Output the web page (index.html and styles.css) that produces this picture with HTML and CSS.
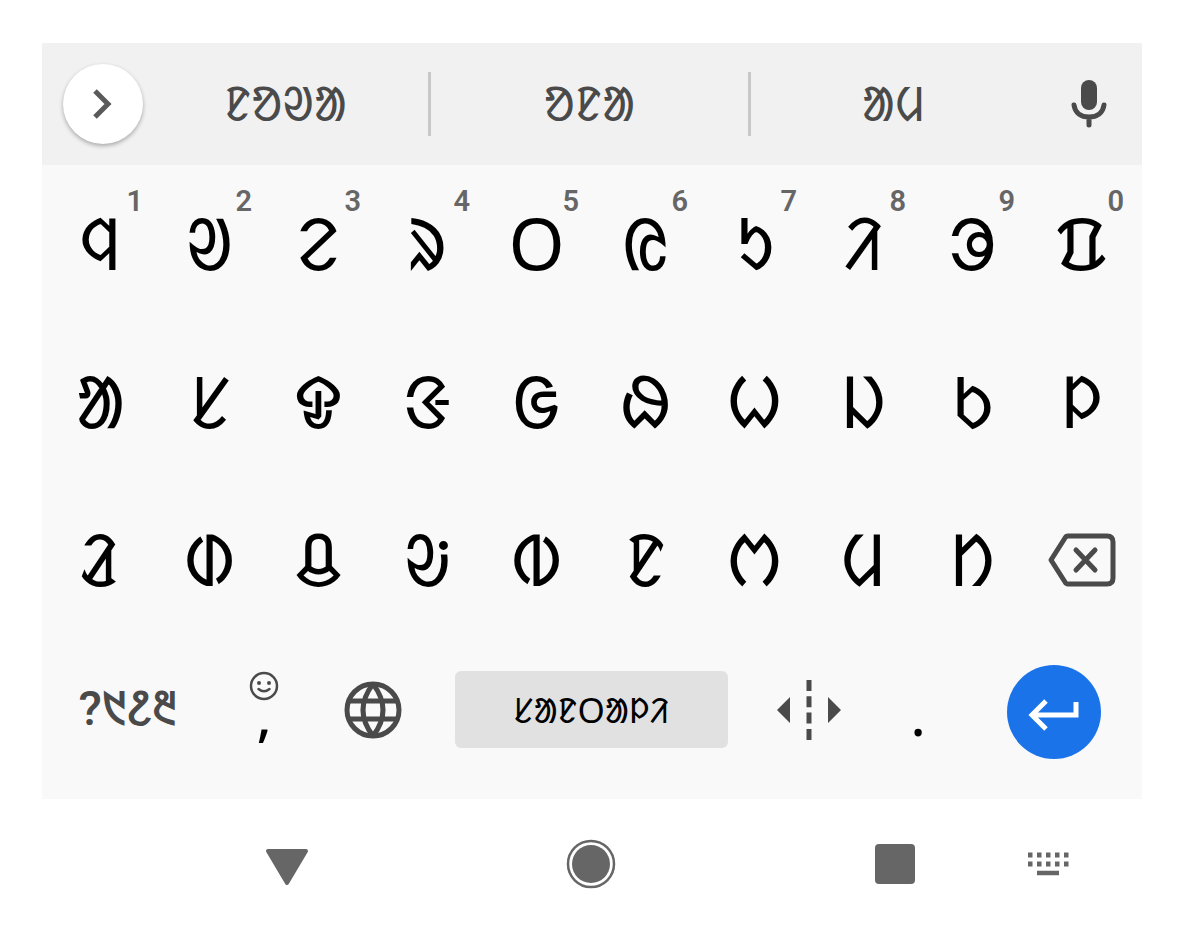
FILE: index.html
```html
<!DOCTYPE html>
<html lang="sat">
<head>
<meta charset="UTF-8">
<meta name="viewport" content="width=device-width, initial-scale=1.0">
<title>ᱥᱟᱱᱛᱟᱞᱤ</title>
<link rel="stylesheet" href="styles.css">
</head>
<body>
<div class="keyboard">
    <div class="strip">
        <button class="expand" aria-label="Expand">
            <svg width="24" height="32" viewBox="0 0 24 32"><path d="M4 3L17 16L4 29" fill="none" stroke="#5a5a5a" stroke-width="5"/></svg>
        </button>
        <div class="suggestions">
            <button class="suggestion">ᱱᱚᱣᱟ</button>
            <button class="suggestion middle">ᱚᱱᱟ</button>
            <button class="suggestion">ᱟᱢ</button>
        </div>
        <button class="mic" aria-label="Voice input">
            <svg width="36" height="48" viewBox="0 0 36 48">
                <rect x="10" y="0" width="16" height="30" rx="8" fill="#4a4a4a"/>
                <path d="M3 25C4 33 10 37 18 37S32 33 33 25M18 37V45" fill="none" stroke="#4a4a4a" stroke-width="5" stroke-linecap="round"/>
            </svg>
        </button>
    </div>

    <div class="rows">
        <div class="row">
            <button class="key">ᱧ<span class="hint">1</span></button>
            <button class="key">ᱣ<span class="hint">2</span></button>
            <button class="key">ᱮ<span class="hint">3</span></button>
            <button class="key">ᱨ<span class="hint">4</span></button>
            <button class="key">ᱛ<span class="hint">5</span></button>
            <button class="key">ᱭ<span class="hint">6</span></button>
            <button class="key">ᱩ<span class="hint">7</span></button>
            <button class="key">ᱤ<span class="hint">8</span></button>
            <button class="key">ᱳ<span class="hint">9</span></button>
            <button class="key">ᱯ<span class="hint">0</span></button>
        </div>
        <div class="row">
            <button class="key">ᱟ</button>
            <button class="key">ᱥ</button>
            <button class="key">ᱫ</button>
            <button class="key">ᱝ</button>
            <button class="key">ᱜ</button>
            <button class="key">ᱷ</button>
            <button class="key">ᱦ</button>
            <button class="key">ᱡ</button>
            <button class="key">ᱠ</button>
            <button class="key">ᱞ</button>
        </div>
        <div class="row">
            <button class="key">ᱲ</button>
            <button class="key">ᱰ</button>
            <button class="key">ᱪ</button>
            <button class="key">ᱶ</button>
            <button class="key">ᱵ</button>
            <button class="key">ᱱ</button>
            <button class="key">ᱬ</button>
            <button class="key">ᱢ</button>
            <button class="key">ᱴ</button>
            <button class="key icon" aria-label="Backspace">
                <svg width="70" height="56" viewBox="0 0 70 56" fill="none" stroke="#4a4a4a" stroke-width="5">
                    <path d="M21 4H60Q66 4 66 10V46Q66 52 60 52H21Q19 52 18 50L4 28L18 6Q19 4 21 4Z" stroke-linejoin="round"/>
                    <path d="M29 18L48 38M48 18L29 38" stroke-linecap="round"/>
                </svg>
            </button>
        </div>
        <div class="row bottom">
            <button class="key wide symbols">?᱑᱒᱓</button>
            <button class="key punct">,<svg class="smiley" width="30" height="30" viewBox="0 0 30 30">
                    <circle cx="15" cy="15" r="13" fill="none" stroke="#4a4a4a" stroke-width="2.5"/>
                    <circle cx="10" cy="12" r="2" fill="#4a4a4a"/>
                    <circle cx="20" cy="12" r="2" fill="#4a4a4a"/>
                    <path d="M9.500 18Q15 22.500 20.500 18" fill="none" stroke="#4a4a4a" stroke-width="2.500" stroke-linecap="round"/>
                </svg></button>
            <button class="key icon" aria-label="Language">
                <svg width="58" height="58" viewBox="0 0 58 58" fill="none" stroke="#4a4a4a" stroke-width="5">
                    <circle cx="29" cy="29" r="26"/>
                    <path d="M4 20H54M4 38H54M29 3Q9 29 29 55M29 3Q49 29 29 55"/>
                </svg>
            </button>
            <button class="key space"><span class="bar">ᱥᱟᱱᱛᱟᱞᱤ</span></button>
            <button class="key icon" aria-label="Move cursor">
                <svg width="64" height="60" viewBox="0 0 64 60" fill="#4a4a4a">
                    <path d="M0 30L13 17V43ZM64 30L51 17V43Z"/>
                    <path d="M32 0V60" stroke="#4a4a4a" stroke-width="5" stroke-dasharray="11 5.3"/>
                </svg>
            </button>
            <button class="key punct">.</button>
            <button class="key wide enter-key" aria-label="Enter">
                <span class="enter">
                    <svg width="54" height="40" viewBox="0 0 54 40" fill="none" stroke="#fff" stroke-width="5">
                        <path d="M49 10V23H6M19 9L5 23L19 37"/>
                    </svg>
                </span>
            </button>
        </div>
    </div>
</div>

<div class="navbar">
    <button class="nav back" aria-label="Back">
        <svg width="48" height="48" viewBox="0 0 48 48"><path d="M5 11H43L24 43Z" fill="#666" stroke="#666" stroke-width="4" stroke-linejoin="round"/></svg>
    </button>
    <button class="nav" aria-label="Home">
        <svg width="50" height="50" viewBox="0 0 50 50"><circle cx="25" cy="25" r="23" fill="none" stroke="#666" stroke-width="2.5"/><circle cx="25" cy="25" r="19" fill="#666"/></svg>
    </button>
    <button class="nav" aria-label="Overview">
        <svg width="42" height="42" viewBox="0 0 42 42"><rect x="1" y="1" width="40" height="40" rx="4" fill="#666"/></svg>
    </button>
    <button class="nav" aria-label="Switch keyboard">
        <svg width="42" height="24" viewBox="0 0 42 24" stroke="#666" fill="none">
            <path d="M1 3H42M1 12H42" stroke-width="5" stroke-dasharray="4.5 4.5"/>
            <path d="M10 21H32" stroke-width="4.5"/>
        </svg>
    </button>
</div>
</body>
</html>
```
FILE: styles.css
```css
body {
    margin: 0;
    padding: 43px 50px 0 42px;
    background-color: #fff;
    font-family: "Noto Sans Ol Chiki", "Noto Sans", sans-serif;
}
button {
    margin: 0;
    padding: 0;
    border: none;
    background: none;
    font-family: inherit;
    color: #000;
    cursor: pointer;
}
svg {
    display: block;
}
.keyboard {
    background-color: #f9f9f9;
}
.strip {
    display: flex;
    align-items: center;
    height: 122px;
    padding-left: 21px;
    background-color: #f1f1f1;
}
.expand {
    display: flex;
    align-items: center;
    justify-content: center;
    width: 80px;
    height: 80px;
    border-radius: 50%;
    background-color: #fff;
    box-shadow: 0 2px 4px rgba(0, 0, 0, 0.3);
}
.suggestions {
    display: flex;
    flex: 1;
}
.suggestion {
    flex: 9;
    height: 64px;
    padding-bottom: 2px;
    font-size: 48px;
    line-height: 62px;
    color: #4a4a4a;
}
.suggestion.middle {
    flex: 10;
    border-left: 3px solid #c8c8c8;
    border-right: 3px solid #c8c8c8;
}
.mic {
    display: flex;
    justify-content: center;
    width: 106px;
}
.rows {
    padding: 0 6px 14px 4px;
}
.row {
    display: flex;
    height: 158px;
}
.row.bottom {
    height: 146px;
}
.key {
    position: relative;
    display: flex;
    flex: 2 1 0;
    align-items: center;
    justify-content: center;
    padding-bottom: 5px;
    font-size: 72px;
    line-height: 96px;
}
.key.wide {
    flex-grow: 3;
}
.key.icon,
.key.enter-key {
    padding-bottom: 0;
}
.key.space {
    flex-grow: 6;
}
.bottom .icon {
    padding-bottom: 4px;
}
.hint {
    position: absolute;
    top: 22px;
    right: 12px;
    font-family: Roboto, sans-serif;
    font-size: 29px;
    font-weight: 600;
    line-height: 29px;
    color: #666;
}
.key.symbols {
    padding-bottom: 6px;
    font-family: Roboto, "Noto Sans Ol Chiki", "Noto Sans", sans-serif;
    font-size: 48px;
    font-weight: 500;
    color: #4a4a4a;
}
.key.punct {
    padding-top: 6px;
    padding-bottom: 0;
    font-size: 54px;
    font-weight: 500;
}
.smiley {
    position: absolute;
    top: 32px;
    left: 50%;
    margin-left: -15px;
}
.bar {
    flex: 1;
    margin: 0 27px;
    border-radius: 6px;
    background-color: #e1e1e1;
    font-size: 35px;
    line-height: 77px;
}
.enter {
    display: flex;
    align-items: center;
    justify-content: center;
    width: 94px;
    height: 94px;
    border-radius: 50%;
    background-color: #1a73e8;
}
.navbar {
    display: grid;
    grid-template-columns: 186fr 118fr 490fr 118fr 188fr;
    align-items: center;
    height: 129px;
}
.nav {
    display: flex;
    justify-content: center;
}
.nav.back {
    grid-column: 2;
}
```
